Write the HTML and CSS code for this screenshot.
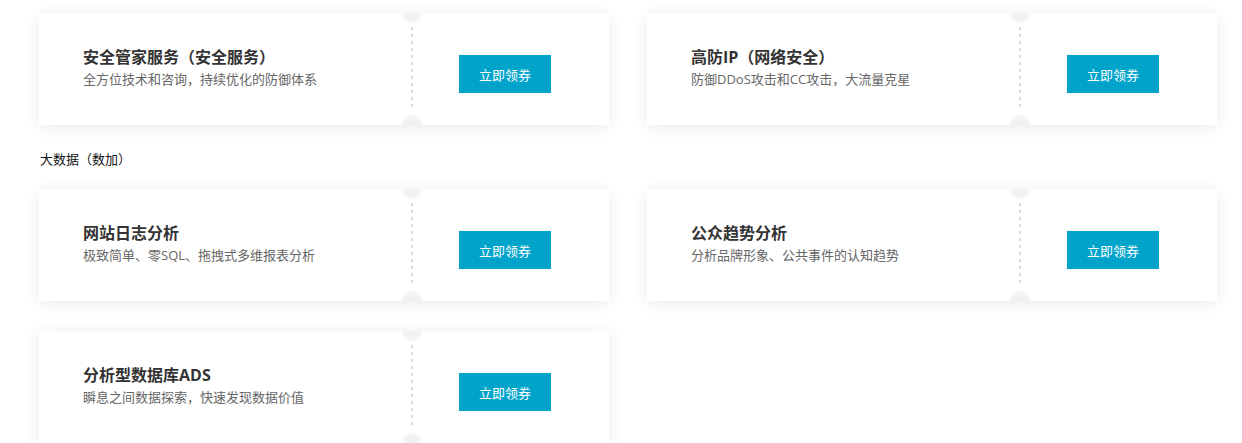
FILE: index.html
```html
<!DOCTYPE html>
<html lang="zh-CN">

<head>
    <meta charset="UTF-8" />
    <meta name="viewport" content="width=device-width, initial-scale=1.0" />
    <title>优惠券</title>
    <link rel="stylesheet" href="styles.css">
</head>

<body>
    <!-- 安全 -->
    <div class="coupon-grid">
        <div class="coupon">
            <div class="coupon-info">
                <h3>安全管家服务（安全服务）</h3>
                <p>全方位技术和咨询，持续优化的防御体系</p>
            </div>
            <div class="coupon-action">
                <button class="btn-get">立即领券</button>
            </div>
        </div>
        <div class="coupon">
            <div class="coupon-info">
                <h3>高防IP（网络安全）</h3>
                <p>防御DDoS攻击和CC攻击，大流量克星</p>
            </div>
            <div class="coupon-action">
                <button class="btn-get">立即领券</button>
            </div>
        </div>
    </div>

    <!-- 大数据 -->
    <div class="section-title">大数据（数加）</div>
    <div class="coupon-grid">
        <div class="coupon">
            <div class="coupon-info">
                <h3>网站日志分析</h3>
                <p>极致简单、零SQL、拖拽式多维报表分析</p>
            </div>
            <div class="coupon-action">
                <button class="btn-get">立即领券</button>
            </div>
        </div>
        <div class="coupon">
            <div class="coupon-info">
                <h3>公众趋势分析</h3>
                <p>分析品牌形象、公共事件的认知趋势</p>
            </div>
            <div class="coupon-action">
                <button class="btn-get">立即领券</button>
            </div>
        </div>
        <div class="coupon">
            <div class="coupon-info">
                <h3>分析型数据库ADS</h3>
                <p>瞬息之间数据探索，快速发现数据价值</p>
            </div>
            <div class="coupon-action">
                <button class="btn-get">立即领券</button>
            </div>
        </div>
    </div>
</body>

</html>
```

FILE: styles.css
```css
* {
    box-sizing: border-box;
}

body {
    font-family: "Open Sans", "Noto Sans CJK SC", sans-serif;
    margin: 0;
    padding: 13px 25px 0 39px;
    background-color: #ffffff;
    color: #333;
}

.coupon-grid {
    display: grid;
    grid-template-columns: 570px 570px;
    column-gap: 38px;
    row-gap: 30px;
}

.section-title {
    font-size: 13px;
    line-height: 20px;
    color: #111;
    margin: 24px 0 20px 1px;
}

.coupon {
    display: flex;
    height: 112px;
    overflow: hidden;
    background-color: #fff;
    box-shadow: 0 2px 14px rgba(0, 0, 0, 0.09);
}

.coupon-info {
    width: 373px;
    padding: 33px 0 0 44px;
}

.coupon-info h3 {
    margin: 0;
    font-size: 16px;
    line-height: 22px;
    font-weight: bold;
    color: #333;
}

.coupon-info p {
    margin: 0;
    font-size: 13px;
    line-height: 22px;
    color: #666;
}

/* 虚线 + 上下缺口 */
.coupon-action {
    position: relative;
    flex: 1;
    padding: 42px 0 0 47px;
}

.coupon-action::before {
    content: "";
    position: absolute;
    left: -1px;
    top: 14px;
    bottom: 14px;
    width: 2px;
    background: repeating-linear-gradient(to bottom, #dcdcdc 0, #dcdcdc 3px, transparent 3px, transparent 7px);
}

.coupon-action::after {
    content: "";
    position: absolute;
    left: -11px;
    top: -11px;
    width: 22px;
    height: 134px;
    background:
        radial-gradient(circle at 11px 11px, #eeeeee 0, #f3f3f3 7px, #f6f6f6 10px, transparent 11px),
        radial-gradient(circle at 11px 123px, #eeeeee 0, #f3f3f3 7px, #f6f6f6 10px, transparent 11px);
}

.btn-get {
    width: 92px;
    height: 38px;
    border: none;
    background-color: #00a3c9;
    color: #fff;
    font-family: inherit;
    font-size: 13px;
    cursor: pointer;
    transition: background-color 0.3s ease;
}

.btn-get:hover {
    background-color: #0090b3;
}
```
